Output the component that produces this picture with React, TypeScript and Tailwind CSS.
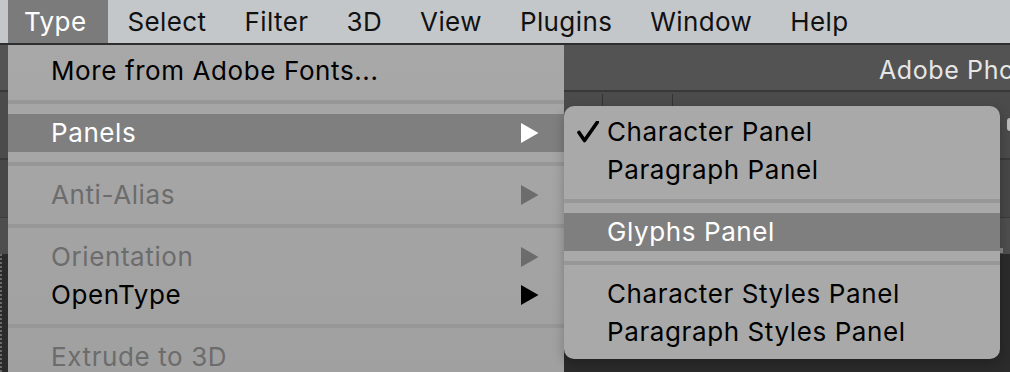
import React from 'react';

type Item =
  | { kind: 'sep' }
  | { kind: 'item'; label: string; state?: 'normal' | 'disabled' | 'active'; arrow?: boolean; checked?: boolean };

const typeMenu: Item[] = [
  { kind: 'item', label: 'More from Adobe Fonts...' },
  { kind: 'sep' },
  { kind: 'item', label: 'Panels', state: 'active', arrow: true },
  { kind: 'sep' },
  { kind: 'item', label: 'Anti-Alias', state: 'disabled', arrow: true },
  { kind: 'sep' },
  { kind: 'item', label: 'Orientation', state: 'disabled', arrow: true },
  { kind: 'item', label: 'OpenType', arrow: true },
  { kind: 'sep' },
  { kind: 'item', label: 'Extrude to 3D', state: 'disabled' },
];

const panelsMenu: Item[] = [
  { kind: 'item', label: 'Character Panel', checked: true },
  { kind: 'item', label: 'Paragraph Panel' },
  { kind: 'sep' },
  { kind: 'item', label: 'Glyphs Panel', state: 'active' },
  { kind: 'sep' },
  { kind: 'item', label: 'Character Styles Panel' },
  { kind: 'item', label: 'Paragraph Styles Panel' },
];

const menuBar = ['Type', 'Select', 'Filter', '3D', 'View', 'Plugins', 'Window', 'Help'];

const Arrow = ({ color }: { color: string }) => (
  <svg width="18" height="20" viewBox="0 0 18 20">
    <polygon points="0,0 17.5,10 0,20" fill={color} />
  </svg>
);

const Check = () => (
  <svg width="22" height="22" viewBox="0 0 22 22" className="absolute left-[13px] top-[8px]">
    <path d="M2 11.5 L7.5 19.5 L20.5 1" fill="none" stroke="#000" strokeWidth="3.6" strokeLinecap="round" strokeLinejoin="round" />
  </svg>
);

const MenuRows = ({ items }: { items: Item[] }) => (
  <>
    {items.map((it, i) => {
      if (it.kind === 'sep') {
        return (
          <div key={i} className="h-[24px] flex items-center">
            <div className="h-[4px] w-full bg-[#979797]" />
          </div>
        );
      }
      const state = it.state ?? 'normal';
      const text = state === 'active' ? 'text-white' : state === 'disabled' ? 'text-[#6c6c6c]' : 'text-black';
      const arrowColor = state === 'active' ? '#ffffff' : state === 'disabled' ? '#6c6c6c' : '#000000';
      return (
        <div
          key={i}
          className={`relative h-[38px] flex items-center pl-[43px] pr-[25px] ${state === 'active' ? 'bg-[#7f7f7f]' : ''} ${text}`}
        >
          {it.checked && <Check />}
          <span className="flex-1 whitespace-nowrap">{it.label}</span>
          {it.arrow && <Arrow color={arrowColor} />}
        </div>
      );
    })}
  </>
);

export default function App() {
  return (
    <div className="relative w-[1010px] h-[372px] overflow-hidden bg-[#2b2b2b] font-['Inter',sans-serif] text-[26px] tracking-[0.6px] leading-none">
      <div className="flex flex-col h-full">
        {/* mac menu bar */}
        <div className="h-[45px] shrink-0 flex pl-[8px] bg-[#c4c7c9] border-b-2 border-[#2e2e2e] tracking-[0.4px]">
          {menuBar.map((m) => (
            <div
              key={m}
              className={`h-full flex items-center ${m === 'Type' ? 'pl-[16px] pr-[22px] bg-[#7b7b7b] text-white' : 'px-[19px] text-[#111]'}`}
            >
              {m}
            </div>
          ))}
        </div>

        {/* photoshop title bar */}
        <div className="h-[47px] shrink-0 flex items-center pt-[5px] pl-[879px] bg-[#535353] border-b-2 border-[#393939] text-[#e6e6e6] text-[25px] whitespace-nowrap overflow-hidden">
          Adobe Photoshop 2022
        </div>

        {/* options bar */}
        <div className="h-[68px] shrink-0 flex items-start bg-[#4b4b4b] border-b-2 border-[#3a3a3a]">
          <div className="ml-[602px] mt-[2px] w-px h-[20px] bg-[#333]" />
          <div className="ml-[69px] mt-[2px] w-px h-[20px] bg-[#333]" />
          <div className="ml-auto mr-[-8px] mt-[26px] w-[11px] h-[13px] rounded-[3px] bg-[#bdbdbd]" />
        </div>

        {/* tab bar */}
        <div className="h-[58px] shrink-0 bg-[#474747] border-b border-[#3a3a3a]" />
        <div className="h-[36px] shrink-0 flex bg-[#4e4e4e]">
          <div className="ml-auto mr-[7px] mt-[30px] w-[3px] h-[5px] bg-[#8a8a8a]" />
        </div>
        <div className="flex-1 flex">
          <div className="w-[3px] border-l-2 border-dotted border-[#6a6a6a]" />
        </div>
      </div>

      {/* Type menu */}
      <div className="absolute left-[8px] top-[45px] w-[556px] h-[340px] pt-[7px] bg-gradient-to-b from-[#a8a8a8] to-[#a0a0a0]">
        <MenuRows items={typeMenu} />
      </div>

      {/* Panels submenu */}
      <div className="absolute left-[564px] top-[106px] w-[436px] h-[253px] pt-[7px] rounded-[10px] overflow-hidden bg-[#a9a9a9] shadow-[0_4px_12px_rgba(0,0,0,0.25)]">
        <MenuRows items={panelsMenu} />
      </div>
    </div>
  );
}
